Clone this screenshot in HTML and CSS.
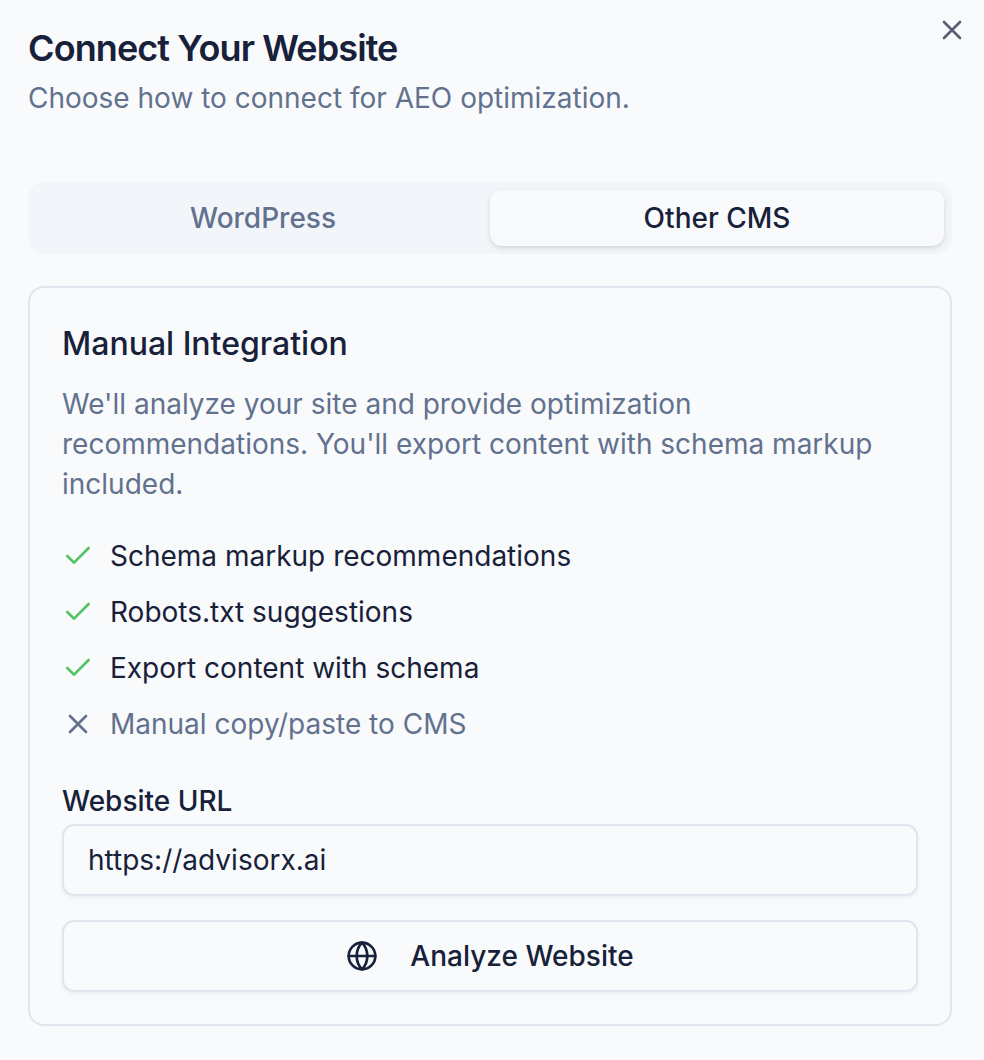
FILE: index.html
```html
<!DOCTYPE html>
<html lang="en">
<head>
    <meta charset="UTF-8">
    <meta name="viewport" content="width=device-width, initial-scale=1.0">
    <title>Connect Your Website</title>
    <link rel="stylesheet" href="styles.css">
</head>
<body>
    <div class="dialog">
        <button class="close" aria-label="Close">
            <svg viewBox="0 0 24 24"><path d="M18 6 6 18M6 6l12 12"/></svg>
        </button>

        <h1>Connect Your Website</h1>
        <p class="subtitle">Choose how to connect for AEO optimization.</p>

        <div class="tabs">
            <button class="tab">WordPress</button>
            <button class="tab active">Other CMS</button>
        </div>

        <div class="card">
            <h2>Manual Integration</h2>
            <p class="description">We'll analyze your site and provide optimization recommendations. You'll export content with schema markup included.</p>

            <ul class="features">
                <li><svg class="check" viewBox="0 0 24 24"><path d="M20 6 9 17l-5-5"/></svg>Schema markup recommendations</li>
                <li><svg class="check" viewBox="0 0 24 24"><path d="M20 6 9 17l-5-5"/></svg>Robots.txt suggestions</li>
                <li><svg class="check" viewBox="0 0 24 24"><path d="M20 6 9 17l-5-5"/></svg>Export content with schema</li>
                <li class="muted"><svg viewBox="0 0 24 24"><path d="M18 6 6 18M6 6l12 12"/></svg>Manual copy/paste to CMS</li>
            </ul>

            <label for="url">Website URL</label>
            <input type="text" id="url" value="https://advisorx.ai">
            <button class="analyze">
                <svg viewBox="0 0 24 24"><circle cx="12" cy="12" r="10"/><path d="M12 2a14.5 14.5 0 0 0 0 20 14.5 14.5 0 0 0 0-20M2 12h20"/></svg>
                <span>Analyze Website</span>
            </button>
        </div>
    </div>
</body>
</html>
```
FILE: styles.css
```css
* {
    box-sizing: border-box;
}
body {
    margin: 0;
    background: #f9fafc;
    color: #172139;
    font-family: Inter, sans-serif;
    font-size: 28px;
    line-height: 40px;
}
h1, h2, p, ul {
    margin: 0;
    padding: 0;
}
button, input {
    font: inherit;
    color: inherit;
}
svg {
    display: block;
    flex: none;
    width: 32px;
    height: 32px;
    fill: none;
    stroke: currentColor;
    stroke-width: 2;
    stroke-linecap: round;
    stroke-linejoin: round;
}
.dialog {
    position: relative;
    height: 1060px;
    padding: 30px 32px 0 28px;
}
.close {
    position: absolute;
    top: 14px;
    right: 16px;
    padding: 0;
    border: none;
    background: none;
    color: #5a6073;
}
h1 {
    font-size: 36px;
    line-height: 36px;
    font-weight: 600;
    letter-spacing: -0.9px;
}
.subtitle {
    margin-top: 12px;
    color: #62718e;
}
.tabs {
    display: flex;
    height: 72px;
    margin-top: 64px;
    padding: 8px;
    border-radius: 16px;
    background: #f2f5fa;
}
.tab {
    flex: 1;
    padding: 0;
    border: none;
    border-radius: 12px;
    background: none;
    color: #62718e;
    font-weight: 500;
}
.tab.active {
    background: #f9fafc;
    color: #172139;
    box-shadow: 0 2px 6px rgba(0, 0, 0, 0.1), 0 2px 4px -2px rgba(0, 0, 0, 0.1);
}
.card {
    height: 740px;
    margin-top: 32px;
    padding: 32px;
    border: 2px solid #e0e6ed;
    border-radius: 16px;
}
h2 {
    font-size: 32px;
    line-height: 48px;
    font-weight: 500;
}
.description {
    margin-top: 16px;
    color: #62718e;
}
.features {
    display: flex;
    flex-direction: column;
    gap: 16px;
    margin-top: 32px;
    list-style: none;
}
.features li {
    display: flex;
    align-items: center;
    gap: 16px;
}
.check {
    color: #56c267;
}
.muted {
    color: #62718e;
}
label {
    display: block;
    margin-top: 43px;
    line-height: 28px;
    font-weight: 500;
}
input {
    display: block;
    width: 100%;
    height: 72px;
    margin-top: 9px;
    padding: 0 24px;
    border: 2px solid #e0e6ed;
    border-radius: 12px;
    background: transparent;
    box-shadow: 0 2px 4px rgba(0, 0, 0, 0.05);
}
.analyze {
    display: flex;
    align-items: center;
    justify-content: center;
    gap: 32px;
    width: 100%;
    height: 72px;
    margin-top: 24px;
    padding: 0;
    border: 2px solid #e0e6ed;
    border-radius: 12px;
    background: #f9fafc;
    font-weight: 500;
    box-shadow: 0 2px 4px rgba(0, 0, 0, 0.05);
}
```
